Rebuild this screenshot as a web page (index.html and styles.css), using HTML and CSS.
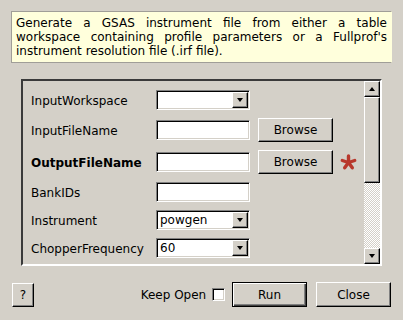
FILE: index.html
```html
<!DOCTYPE html>
<html>
	<head>
		<meta charset="utf-8" />
		<title>GSAS instrument file</title>
		<link rel="stylesheet" href="styles.css">
	</head>
	<body>
		<div class="dialog">
			<p class="description">Generate a GSAS instrument file from either a table workspace containing profile parameters or a Fullprof's instrument resolution file (.irf file).</p>
			<div class="scroll-frame">
				<div class="prop-area">
					<span class="prop-label">InputWorkspace</span>
					<div class="combo"><span class="combo-text"></span><span class="combo-btn"></span></div>
					<span></span><span></span>

					<span class="prop-label">InputFileName</span>
					<div class="field"></div>
					<button type="button" class="btn browse-btn">Browse</button><span></span>

					<span class="prop-label bold">OutputFileName</span>
					<div class="field"></div>
					<button type="button" class="btn browse-btn">Browse</button>
					<svg class="required" width="17" height="17" viewBox="0 0 17 17">
						<g stroke="#b8382c" stroke-width="3.4" stroke-linecap="round">
							<line x1="8.5" y1="8.5" x2="8.5" y2="2" />
							<line x1="8.5" y1="8.5" x2="14.7" y2="6.5" />
							<line x1="8.5" y1="8.5" x2="12.3" y2="13.8" />
							<line x1="8.5" y1="8.5" x2="4.7" y2="13.8" />
							<line x1="8.5" y1="8.5" x2="2.3" y2="6.5" />
						</g>
					</svg>

					<span class="prop-label">BankIDs</span>
					<div class="field"></div>
					<span></span><span></span>

					<span class="prop-label">Instrument</span>
					<div class="combo"><span class="combo-text">powgen</span><span class="combo-btn"></span></div>
					<span></span><span></span>

					<span class="prop-label">ChopperFrequency</span>
					<div class="combo"><span class="combo-text">60</span><span class="combo-btn"></span></div>
					<span></span><span></span>

					<span class="prop-label peek"></span>
					<div class="field peek"></div>
					<span></span><span></span>
				</div>
				<div class="scrollbar">
					<span class="sb-btn sb-up"></span>
					<span class="sb-slider"></span>
					<span class="sb-trough"></span>
					<span class="sb-btn sb-down"></span>
				</div>
			</div>
			<div class="button-bar">
				<button type="button" class="btn help-btn">?</button>
				<span class="spacer"></span>
				<label class="keep-open">Keep Open <span class="checkbox"></span></label>
				<button type="button" class="btn run-btn">Run</button>
				<button type="button" class="btn close-btn">Close</button>
			</div>
		</div>
	</body>
</html>
```

FILE: styles.css
```css
* {
	padding: 0;
	margin: 0;
	box-sizing: border-box;
}
body {
	background-color: #d4d0c8;
	font-family: "DejaVu Sans", sans-serif;
	font-size: 12px;
	color: #000;
}
.dialog {
	width: 403px;
	height: 320px;
	padding: 11px 11px 0 11px;
}
.description {
	height: 52px;
	padding: 4px 4px 4px 4px;
	background-color: #ffffdc;
	border: 1px solid #a09e98;
	border-right-color: #ffffdc;
	line-height: 14px;
	text-align: justify;
}
.scroll-frame {
	margin: 16px 10px 0 10px;
	height: 187px;
	display: flex;
	border: 2px solid;
	border-color: #3a3a3a #fff #fff #3a3a3a;
	overflow: hidden;
}
.prop-area {
	flex: 1;
	padding: 9px 0 0 8px;
	display: grid;
	grid-template-columns: 125px 94px 83px 22px;
	grid-auto-rows: min-content;
	row-gap: 8px;
	align-items: center;
	overflow: hidden;
}
.prop-label {
	white-space: nowrap;
	padding-top: 1px;
}
.bold {
	font-weight: bold;
	padding-top: 2px;
}
.peek {
	align-self: start;
	margin-top: -2px;
}
.field,
.combo {
	height: 20px;
	background-color: #fff;
	border: 1px solid;
	border-color: #808080 #fff #fff #808080;
	box-shadow: inset 1px 1px #000, inset -1px -1px #d4d0c8;
}
.combo {
	display: flex;
	padding: 1px;
}
.combo-text {
	flex: 1;
	padding-left: 2px;
	line-height: 17px;
}
.combo-btn {
	width: 16px;
	height: 16px;
	background-color: #d4d0c8;
	border: 1px solid;
	border-color: #fff #000 #000 #fff;
	box-shadow: inset -1px -1px #808080;
	display: flex;
	justify-content: center;
	align-items: center;
}
.combo-btn::after,
.sb-down::after {
	content: "";
	border-left: 3.5px solid transparent;
	border-right: 3.5px solid transparent;
	border-top: 4px solid #000;
}
.sb-up::after {
	content: "";
	border-left: 3.5px solid transparent;
	border-right: 3.5px solid transparent;
	border-bottom: 4px solid #000;
}
.btn {
	font-family: "DejaVu Sans", sans-serif;
	font-size: 12px;
	color: #000;
	background-color: #d4d0c8;
	border: 1px solid;
	border-color: #fff #000 #000 #fff;
	box-shadow: inset -1px -1px #808080;
}
.browse-btn {
	width: 75px;
	height: 24px;
	margin-left: 8px;
}
.required {
	margin-left: 7px;
}
.scrollbar {
	width: 16px;
	display: flex;
	flex-direction: column;
}
.sb-btn {
	height: 16px;
	background-color: #d4d0c8;
	border: 1px solid;
	border-color: #fff #000 #000 #fff;
	box-shadow: inset -1px -1px #808080;
	display: flex;
	justify-content: center;
	align-items: center;
}
.sb-slider {
	height: 86px;
	background-color: #d4d0c8;
	border: 1px solid;
	border-color: #fff #000 #000 #fff;
	box-shadow: inset -1px -1px #808080;
}
.sb-trough {
	flex: 1;
	background-image: repeating-conic-gradient(#fff 0 25%, #d4d0c8 0 50%);
	background-size: 2px 2px;
}
.button-bar {
	display: flex;
	align-items: center;
	margin-top: 16px;
	padding: 0 1px 0 1px;
}
.help-btn {
	width: 22px;
	height: 24px;
}
.spacer {
	flex: 1;
}
.keep-open {
	display: flex;
	align-items: center;
	white-space: pre;
}
.checkbox {
	width: 13px;
	height: 13px;
	margin-left: 2px;
	background-color: #fff;
	border: 1px solid;
	border-color: #808080 #fff #fff #808080;
	box-shadow: inset 1px 1px #000, inset -1px -1px #d4d0c8;
}
.run-btn {
	width: 75px;
	height: 25px;
	margin-left: 7px;
	border-color: #000;
	box-shadow: inset 1px 1px #fff, inset -1px -1px #404040, inset -2px -2px #808080;
}
.close-btn {
	width: 75px;
	height: 25px;
	margin-left: 9px;
}
```
